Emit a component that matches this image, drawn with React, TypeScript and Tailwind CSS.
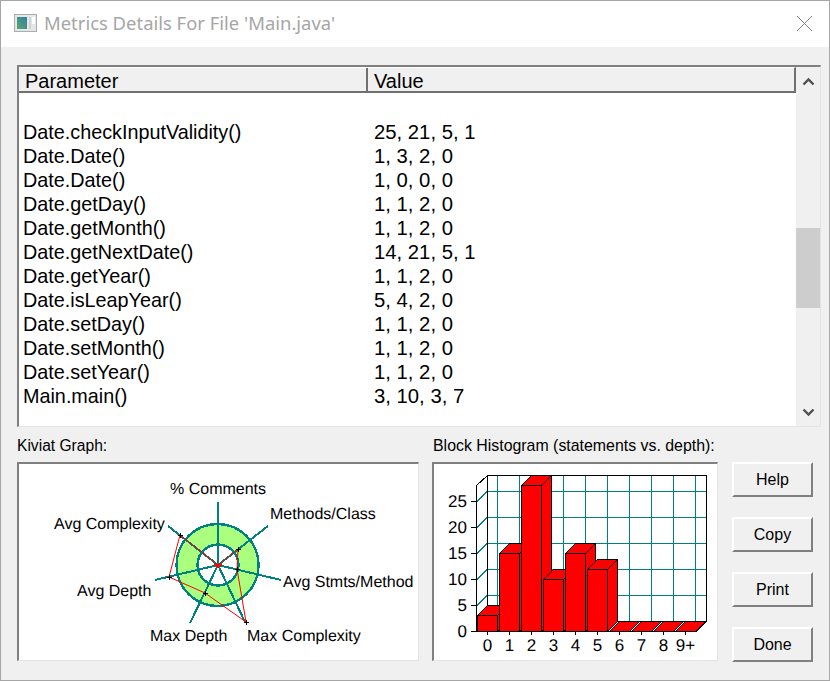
const rows = [
  ["", ""],
  ["Date.checkInputValidity()", "25, 21, 5, 1"],
  ["Date.Date()", "1, 3, 2, 0"],
  ["Date.Date()", "1, 0, 0, 0"],
  ["Date.getDay()", "1, 1, 2, 0"],
  ["Date.getMonth()", "1, 1, 2, 0"],
  ["Date.getNextDate()", "14, 21, 5, 1"],
  ["Date.getYear()", "1, 1, 2, 0"],
  ["Date.isLeapYear()", "5, 4, 2, 0"],
  ["Date.setDay()", "1, 1, 2, 0"],
  ["Date.setMonth()", "1, 1, 2, 0"],
  ["Date.setYear()", "1, 1, 2, 0"],
  ["Main.main()", "3, 10, 3, 7"],
];

const spokes = [
  [218, 502],
  [268, 526],
  [281, 580],
  [245, 622],
  [190, 623],
  [155, 580],
  [168, 526],
];

const kiviatPoints = [
  [218, 565],
  [238, 549],
  [237, 569],
  [246, 622],
  [205, 593],
  [169, 577],
  [180, 535],
];

const kiviatLabels: [string, number, number][] = [
  ["% Comments", 170, 494],
  ["Methods/Class", 270, 519],
  ["Avg Complexity", 54, 529],
  ["Avg Stmts/Method", 283, 587],
  ["Avg Depth", 77, 596],
  ["Max Depth", 150, 641],
  ["Max Complexity", 247, 641],
];

const bars = [3, 15, 28, 10, 15, 12, 0, 0, 0, 0];
const xLabels = ["0", "1", "2", "3", "4", "5", "6", "7", "8", "9+"];

function KiviatGraph() {
  return (
    <svg viewBox="19 464 399 196" className="block w-[399px] h-[196px]" shapeRendering="crispEdges">
      <circle cx="217.5" cy="565" r="41" fill="#aaff7f" stroke="#008080" strokeWidth="2.4" />
      <circle cx="218" cy="565" r="20.5" fill="#ffffff" stroke="#008080" strokeWidth="2.4" />
      {spokes.map(([x, y], i) => (
        <line key={i} x1="218" y1="565" x2={x} y2={y} stroke="#008080" strokeWidth="2" />
      ))}
      <polygon
        points={kiviatPoints.map(([x, y]) => `${x},${y}`).join(" ")}
        fill="none"
        stroke="#ff0000"
        strokeWidth="1"
        shapeRendering="auto"
      />
      {kiviatPoints.slice(1).map(([x, y], i) => (
        <path key={i} d={`M${x - 2} ${y}H${x + 3}M${x} ${y - 2}V${y + 3}`} stroke="#000000" strokeWidth="1" />
      ))}
      <polygon points="214,564 222,564 218,569" fill="#ff0000" />
      {kiviatLabels.map(([label, x, y]) => (
        <text key={label} x={x} y={y} fontSize="16" fill="#000000" textRendering="geometricPrecision">
          {label}
        </text>
      ))}
    </svg>
  );
}

function Histogram() {
  const gridX = [497, 519, 541, 563, 585, 607, 629, 651, 673, 695];
  const gridY = [491, 517, 543, 569, 595];
  return (
    <svg viewBox="434 464 283 196" className="block w-[283px] h-[196px]" shapeRendering="crispEdges">
      {gridX.map((x) => (
        <line key={x} x1={x + 0.5} y1="476" x2={x + 0.5} y2="621" stroke="#008080" />
      ))}
      {gridY.map((y) => (
        <g key={y}>
          <line x1="487" y1={y + 0.5} x2="707" y2={y + 0.5} stroke="#008080" />
          <line x1="477" y1={y + 10.5} x2="487" y2={y + 0.5} stroke="#008080" />
        </g>
      ))}
      <path d="M487.5 621.5V475.5H706.5V621.5" fill="none" stroke="#000000" />
      <path d="M476.5 631.5V485.5L487.5 475.5" fill="none" stroke="#000000" />
      <path d="M471 631.5H696.5L706.5 621.5M477 631.5L487.5 621.5H706.5" fill="none" stroke="#000000" />
      {[0, 5, 10, 15, 20, 25].map((v) => (
        <g key={v}>
          <line x1="471" y1={631.5 - v * 5.2} x2="477" y2={631.5 - v * 5.2} stroke="#000000" />
          <text x="467" y={637 - v * 5.2} fontSize="17" textAnchor="end" fill="#000000" textRendering="geometricPrecision">
            {v}
          </text>
        </g>
      ))}
      {bars.map((v, i) => {
        const x = 477.5 + 22 * i;
        const top = Math.round(631 - v * 5.2) + 0.5;
        return (
          <g key={i} fill="#ff0000" stroke="#000000">
            <path d={`M${x + 20} 631.5L${x + 30} 621.5V${top - 10}L${x + 20} ${top}Z`} />
            <path d={`M${x} ${top}L${x + 10} ${top - 10}H${x + 30}L${x + 20} ${top}Z`} />
            {v > 0 && <rect x={x} y={top} width="20" height={631.5 - top} />}
          </g>
        );
      })}
      {xLabels.map((label, i) => (
        <g key={label}>
          <line x1={487.5 + 22 * i} y1="631" x2={487.5 + 22 * i} y2="635" stroke="#000000" />
          <text x={487.5 + 22 * i} y="651" fontSize="17" textAnchor="middle" fill="#000000" textRendering="geometricPrecision">
            {label}
          </text>
        </g>
      ))}
    </svg>
  );
}

export default function App() {
  return (
    <div className="w-[830px] h-[681px] flex flex-col bg-[#f0f0f0] border border-[#a6a6a6] font-['Liberation_Sans',sans-serif] text-black overflow-hidden">
      <div className="h-[46px] shrink-0 bg-white flex items-center pl-[13px] pr-[16px] pb-[2px]">
        <svg width="23" height="18" viewBox="0 0 23 18" className="shrink-0">
          <defs>
            <linearGradient id="titleIcon" x1="1" y1="0" x2="0" y2="1">
              <stop offset="0" stopColor="#2f7fa8" />
              <stop offset="1" stopColor="#5aa86a" />
            </linearGradient>
          </defs>
          <rect x="0.5" y="0.5" width="22" height="17" fill="#e4e6e8" stroke="#a8adb0" />
          <rect x="3" y="3" width="10" height="12" fill="url(#titleIcon)" />
          <rect x="15" y="3" width="2" height="12" fill="#cfd3d5" />
          <rect x="18" y="3" width="3" height="7" fill="#ffffff" />
        </svg>
        <span className="ml-[7px] text-[18.45px] text-[#a6a6a6] font-['Noto_Sans',sans-serif]">
          Metrics Details For File 'Main.java'
        </span>
        <svg width="17" height="17" viewBox="0 0 17 17" className="ml-auto shrink-0">
          <path d="M1 1L16 16M16 1L1 16" stroke="#808080" strokeWidth="1" fill="none" />
        </svg>
      </div>

      <div className="flex-1 flex flex-col pl-[16px] pr-[8px] pt-[18px]">
        <div className="h-[362px] shrink-0 flex bg-white border-t-2 border-l-2 border-t-[#808080] border-l-[#808080] border-r border-b border-r-[#e3e3e3] border-b-[#e3e3e3]">
          <div className="w-[777px] shrink-0 flex flex-col">
            <div className="h-[26px] shrink-0 flex bg-[#f0f0f0] border-t border-t-white border-b-2 border-b-[#707070] border-r-2 border-r-[#707070] text-[20px] leading-[26px]">
              <div className="w-[349px] shrink-0 pl-[6px] border-r-2 border-r-[#707070]">Parameter</div>
              <div className="pl-[6px]">Value</div>
            </div>
            <div className="pt-[3px] leading-[24px]">
              {rows.map(([name, value], i) => (
                <div key={i} className="h-[24px] flex">
                  <div className="w-[351px] shrink-0 pl-[4px] text-[19.8px]">{name}</div>
                  <div className="pl-[4px] text-[20.3px]">{value}</div>
                </div>
              ))}
            </div>
          </div>
          <div className="flex-1 flex flex-col bg-[#f0f0f0]">
            <div className="h-[28px] shrink-0 flex items-center justify-center">
              <svg width="13" height="9" viewBox="0 0 13 9">
                <path d="M1.5 7.5L6.5 2.5L11.5 7.5" fill="none" stroke="#505050" strokeWidth="2.4" />
              </svg>
            </div>
            <div className="h-[80px] shrink-0 mt-[133px] bg-[#cdcdcd]" />
            <div className="mt-auto h-[28px] shrink-0 flex items-center justify-center">
              <svg width="13" height="9" viewBox="0 0 13 9">
                <path d="M1.5 1.5L6.5 6.5L11.5 1.5" fill="none" stroke="#505050" strokeWidth="2.4" />
              </svg>
            </div>
          </div>
        </div>

        <div className="flex mt-[9px]">
          <div className="w-[402px] shrink-0">
            <div className="h-[26px] pt-px text-[15.6px] leading-[18px]">Kiviat Graph:</div>
            <div className="h-[199px] bg-white border-t-2 border-l-2 border-t-[#808080] border-l-[#808080] border-r border-b border-r-[#e3e3e3] border-b-[#e3e3e3]">
              <KiviatGraph />
            </div>
          </div>
          <div className="w-[286px] shrink-0 ml-[13px]">
            <div className="h-[26px] pt-px pl-px text-[15.9px] leading-[18px] whitespace-nowrap">
              Block Histogram (statements vs. depth):
            </div>
            <div className="h-[199px] bg-white border-t-2 border-l-2 border-t-[#808080] border-l-[#808080] border-r border-b border-r-[#e3e3e3] border-b-[#e3e3e3]">
              <Histogram />
            </div>
          </div>
          <div className="w-[81px] shrink-0 ml-[14px] mt-[26px] flex flex-col gap-[20px]">
            {["Help", "Copy", "Print", "Done"].map((label) => (
              <button
                key={label}
                className="h-[35px] bg-[#f0f0f0] border-t-2 border-l-2 border-t-white border-l-white border-b-2 border-r-2 border-b-[#808080] border-r-[#808080] text-[16px] leading-none"
              >
                {label}
              </button>
            ))}
          </div>
        </div>
      </div>
    </div>
  );
}
